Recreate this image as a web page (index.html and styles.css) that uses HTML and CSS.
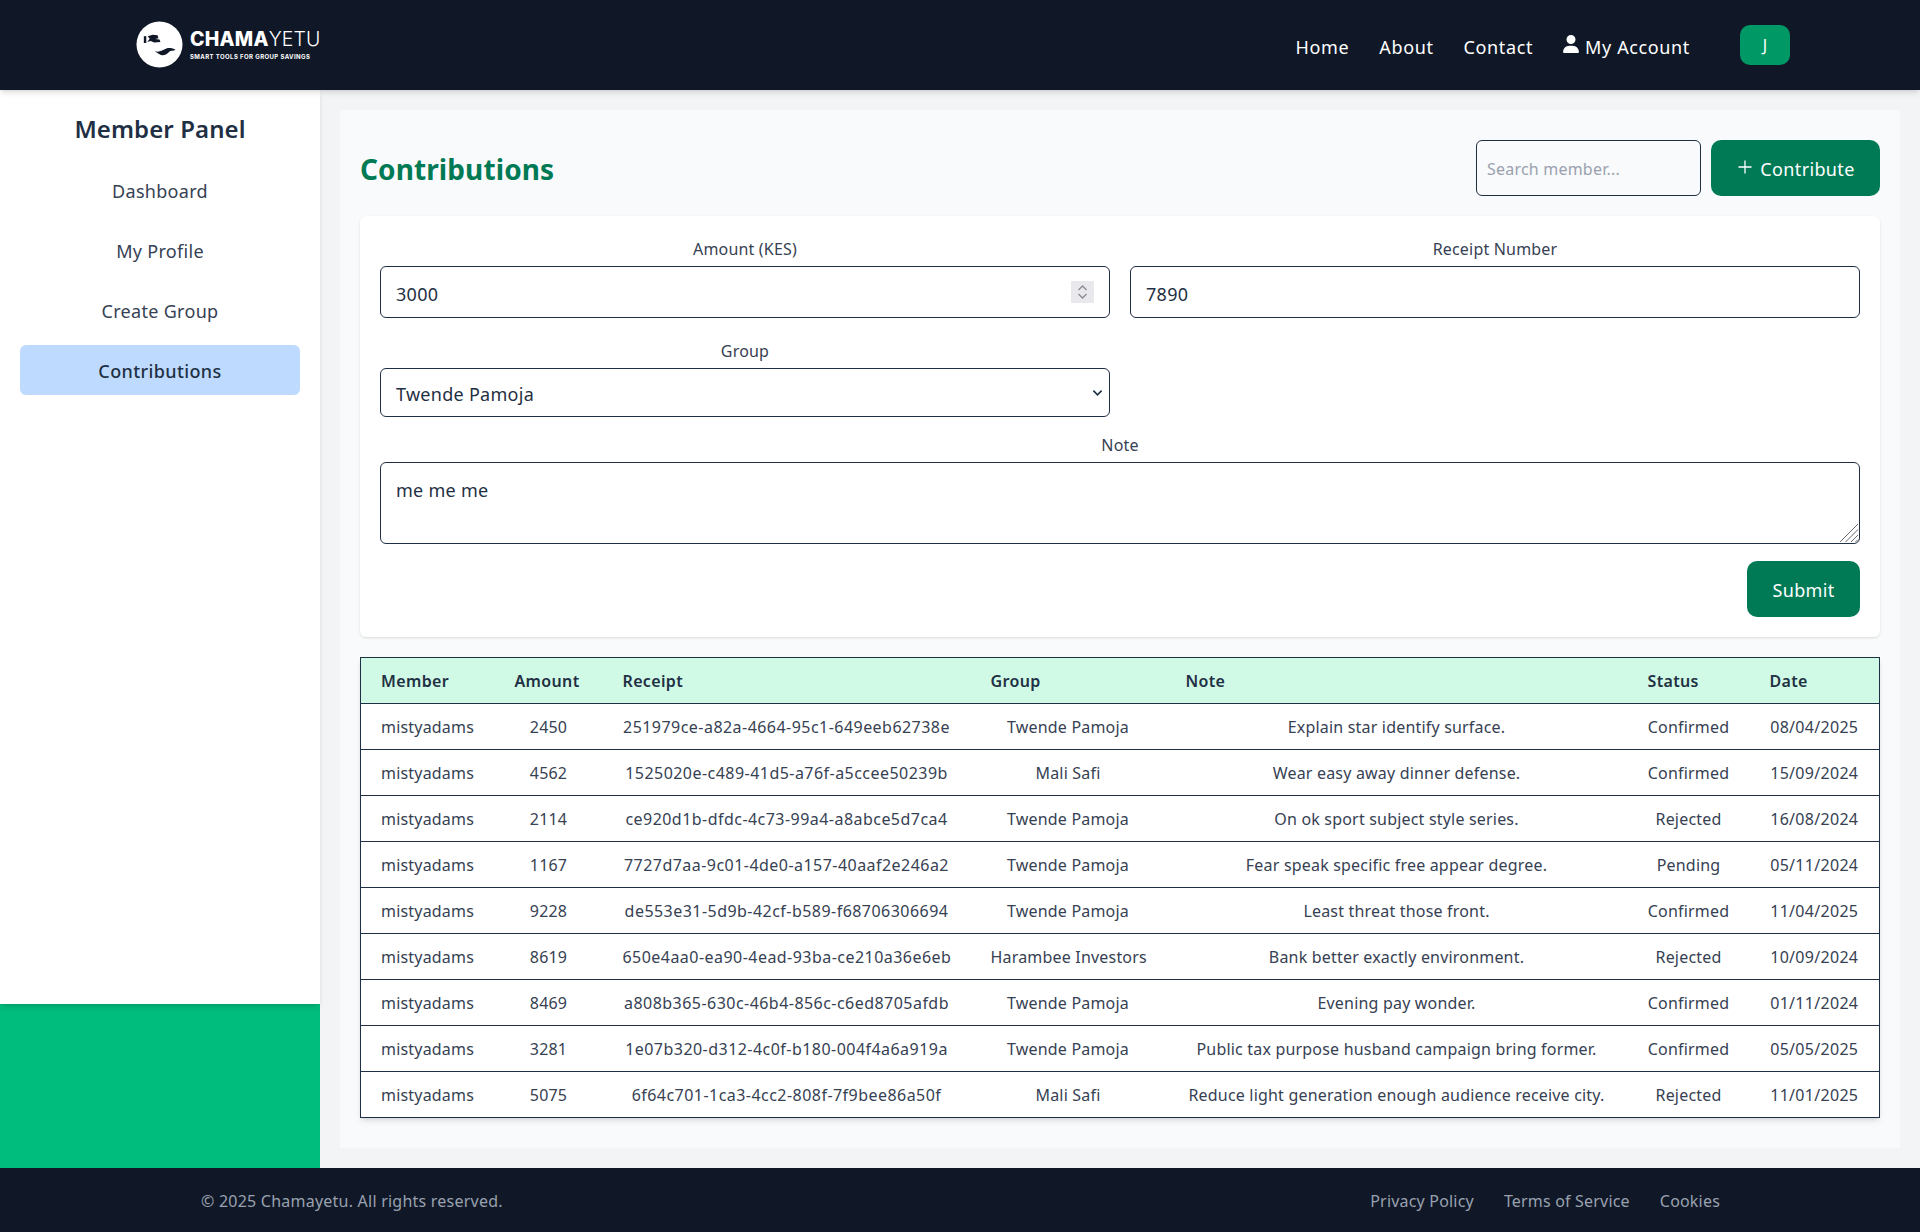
FILE: index.html
```html
<!doctype html>
<html lang="en">
<head>
<meta charset="utf-8">
<title>Contributions</title>
<link rel="stylesheet" href="styles.css">
</head>
<body>
<header class="topbar">
  <a class="logo" href="#">
    <svg class="logo-mark" viewBox="0 0 48 48" aria-hidden="true">
      <circle cx="24" cy="24" r="23.5" fill="#fff"/>
      <path d="M8 15.500h2.500v7H8z" fill="#101828"/>
      <path d="M12 15.500l5-1.500 5 .5 1 3-3.500 1 4.500.5 1 2.500-6.500.5-3.500-1.500-3.500 1 2.500-3.300z" fill="#101828"/>
      <path d="M19 31c3 .5 5 .5 7-.5l5-2.500c3-1 6.500-.5 9.500 1.500l-3 1c-2 0-3 .5-4 1.500-2 2-5 3.500-7 3-2-.5-4.500-2-7.500-4z" fill="#101828"/>
    </svg>
    <span class="logo-text">
      <span class="logo-name"><b>CHAMA</b>YETU</span>
      <span class="logo-tag">SMART TOOLS FOR GROUP SAVINGS</span>
    </span>
  </a>
  <nav class="topnav">
    <a href="#">Home</a>
    <a href="#">About</a>
    <a href="#">Contact</a>
    <a class="account" href="#">
      <svg class="user-icon" viewBox="0 0 448 512" aria-hidden="true"><path fill="currentColor" d="M224 256A128 128 0 1 0 224 0a128 128 0 1 0 0 256zm-45.700 48C79.800 304 0 383.800 0 482.300C0 498.700 13.300 512 29.700 512H418.300c16.400 0 29.700-13.300 29.700-29.700C448 383.800 368.200 304 269.700 304H178.300z"/></svg>
      My Account
    </a>
    <button class="avatar" type="button">J</button>
  </nav>
</header>

<div class="middle">
  <aside class="side">
    <div class="side-panel">
      <h2 class="side-title">Member Panel</h2>
      <ul class="side-menu">
        <li><a href="#">Dashboard</a></li>
        <li><a href="#">My Profile</a></li>
        <li><a href="#">Create Group</a></li>
        <li><a class="active" href="#">Contributions</a></li>
      </ul>
    </div>
    <div class="side-foot"></div>
  </aside>

  <main class="main">
    <section class="panel">
      <div class="panel-head">
        <h1 class="page-title">Contributions</h1>
        <div class="tools">
          <input class="search" type="text" placeholder="Search member...">
          <button class="btn btn-add" type="button">
            <svg class="plus" viewBox="0 0 16 16" aria-hidden="true"><path d="M8 1.500v13M1.500 8h13" stroke="currentColor" stroke-width="1.300" fill="none"/></svg>
            <span class="btn-label">Contribute</span>
          </button>
        </div>
      </div>

      <form class="card">
        <div class="form-grid">
          <label class="field">
            <span class="field-label">Amount (KES)</span>
            <span class="control-wrap">
              <input class="control control-tall" type="text" value="3000">
              <span class="spin">
                <svg viewBox="0 0 23 22" aria-hidden="true"><path d="M7.500 9l4-4 4 4M7.500 13l4 4 4-4" fill="none" stroke="#8b8b94" stroke-width="1.400"/></svg>
              </span>
            </span>
          </label>
          <label class="field">
            <span class="field-label">Receipt Number</span>
            <input class="control control-tall" type="text" value="7890">
          </label>
          <label class="field field-group">
            <span class="field-label">Group</span>
            <span class="control-wrap">
              <select class="control control-select">
                <option>Twende Pamoja</option>
                <option>Mali Safi</option>
                <option>Harambee Investors</option>
              </select>
              <svg class="chevron" viewBox="0 0 12 8" aria-hidden="true"><path d="M1.500 1.500L6 6l4.500-4.500" fill="none" stroke="#1f3044" stroke-width="1.800"/></svg>
            </span>
          </label>
          <label class="field field-wide">
            <span class="field-label">Note</span>
            <span class="control-wrap">
              <textarea class="control control-area">me me me</textarea>
              <svg class="grip" viewBox="0 0 20 20" aria-hidden="true"><path d="M1 19L19 1M6.500 19L19 6.500M12 19l7-7M16.500 19l2.500-2.500" fill="none" stroke="#6b6b72" stroke-width="1"/></svg>
            </span>
          </label>
        </div>
        <div class="form-actions">
          <button class="btn btn-submit" type="submit"><span class="btn-label">Submit</span></button>
        </div>
      </form>

      <table class="records">
        <thead>
          <tr>
            <th class="c-member">Member</th>
            <th class="c-amount">Amount</th>
            <th class="c-receipt">Receipt</th>
            <th class="c-group">Group</th>
            <th class="c-note">Note</th>
            <th class="c-status">Status</th>
            <th class="c-date">Date</th>
          </tr>
        </thead>
        <tbody>
          <tr><td>mistyadams</td><td>2450</td><td>251979ce-a82a-4664-95c1-649eeb62738e</td><td>Twende Pamoja</td><td>Explain star identify surface.</td><td>Confirmed</td><td>08/04/2025</td></tr>
          <tr><td>mistyadams</td><td>4562</td><td>1525020e-c489-41d5-a76f-a5ccee50239b</td><td>Mali Safi</td><td>Wear easy away dinner defense.</td><td>Confirmed</td><td>15/09/2024</td></tr>
          <tr><td>mistyadams</td><td>2114</td><td>ce920d1b-dfdc-4c73-99a4-a8abce5d7ca4</td><td>Twende Pamoja</td><td>On ok sport subject style series.</td><td>Rejected</td><td>16/08/2024</td></tr>
          <tr><td>mistyadams</td><td>1167</td><td>7727d7aa-9c01-4de0-a157-40aaf2e246a2</td><td>Twende Pamoja</td><td>Fear speak specific free appear degree.</td><td>Pending</td><td>05/11/2024</td></tr>
          <tr><td>mistyadams</td><td>9228</td><td>de553e31-5d9b-42cf-b589-f68706306694</td><td>Twende Pamoja</td><td>Least threat those front.</td><td>Confirmed</td><td>11/04/2025</td></tr>
          <tr><td>mistyadams</td><td>8619</td><td>650e4aa0-ea90-4ead-93ba-ce210a36e6eb</td><td>Harambee Investors</td><td>Bank better exactly environment.</td><td>Rejected</td><td>10/09/2024</td></tr>
          <tr><td>mistyadams</td><td>8469</td><td>a808b365-630c-46b4-856c-c6ed8705afdb</td><td>Twende Pamoja</td><td>Evening pay wonder.</td><td>Confirmed</td><td>01/11/2024</td></tr>
          <tr><td>mistyadams</td><td>3281</td><td>1e07b320-d312-4c0f-b180-004f4a6a919a</td><td>Twende Pamoja</td><td>Public tax purpose husband campaign bring former.</td><td>Confirmed</td><td>05/05/2025</td></tr>
          <tr><td>mistyadams</td><td>5075</td><td>6f64c701-1ca3-4cc2-808f-7f9bee86a50f</td><td>Mali Safi</td><td>Reduce light generation enough audience receive city.</td><td>Rejected</td><td>11/01/2025</td></tr>
        </tbody>
      </table>
    </section>
  </main>
</div>

<footer class="footer">
  <p class="copy">© 2025 Chamayetu. All rights reserved.</p>
  <nav class="foot-links">
    <a href="#">Privacy Policy</a>
    <a href="#">Terms of Service</a>
    <a href="#">Cookies</a>
  </nav>
</footer>
</body>
</html>
```
FILE: styles.css
```css
* { box-sizing: border-box; }
html, body { height: 100%; }
body {
  margin: 0;
  display: flex;
  flex-direction: column;
  min-height: 1232px;
  font-family: "Noto Sans", "Open Sans", sans-serif;
  font-size: 16px;
  letter-spacing: .19px;
  color: #1f3044;
  background: #f3f4f6;
}
a { color: inherit; text-decoration: none; }

/* top bar */
.topbar {
  position: relative;
  z-index: 2;
  flex: 0 0 90px;
  display: flex;
  align-items: center;
  justify-content: space-between;
  padding: 0 130px 0 136px;
  background: #101828;
  color: #fff;
  box-shadow: 0 4px 6px -1px rgba(0,0,0,.1), 0 2px 4px -2px rgba(0,0,0,.1);
}
.logo { display: flex; align-items: center; gap: 7px; margin-top: -1px; }
.logo-mark { width: 47px; height: 47px; display: block; }
.logo-text { display: flex; flex-direction: column; }
.logo-name {
  font-family: "Inter", sans-serif;
  font-size: 19.500px;
  font-weight: 300;
  line-height: 20px;
  letter-spacing: .1px;
}
.logo-name b { font-weight: 800; letter-spacing: .25px; }
.logo-tag {
  font-family: "Inter", sans-serif;
  font-size: 6px;
  font-weight: 700;
  line-height: 9px;
  letter-spacing: .41px;
  margin-top: 3px;
}
.topnav { display: flex; align-items: center; gap: 30px; font-size: 18px; letter-spacing: .63px; line-height: 28px; }
.topnav > a { padding-top: 3px; }
.account { display: flex; align-items: center; gap: 6px; }
.user-icon { width: 16px; height: 18px; display: block; margin-top: -5px; }
.avatar {
  width: 50px;
  height: 40px;
  margin-left: 20px;
  border: 0;
  border-radius: 10px;
  background: #009966;
  color: #fff;
  font: inherit;
  font-size: 16px;
}

/* layout */
.middle { flex: 1; display: flex; min-height: 0; }
.side { flex: 0 0 320px; display: flex; flex-direction: column; }
.side-panel {
  position: relative;
  flex: 1;
  padding: 21px 20px 20px;
  background: #fff;
  box-shadow: 0 4px 6px -1px rgba(0,0,0,.1), 0 2px 4px -2px rgba(0,0,0,.1);
}
.side-foot { flex: 0 0 164px; background: #00bc7d; }
.side-title {
  margin: 0 0 18px;
  font-size: 24px;
  font-weight: 600;
  line-height: 36px;
  letter-spacing: .1px;
  text-align: center;
}
.side-menu { list-style: none; margin: 0; padding: 0; display: flex; flex-direction: column; gap: 10px; }
.side-menu a {
  display: flex;
  align-items: center;
  justify-content: center;
  height: 50px;
  padding-top: 2px;
  border-radius: 6px;
  font-size: 18px;
  letter-spacing: .3px;
  color: #364153;
}
.side-menu a.active { background: #bedbff; color: #1f3044; font-weight: 500; letter-spacing: .38px; }

.main { flex: 1; padding: 20px; min-width: 0; }
.panel { height: 100%; padding: 30px 20px; background: #f9fafb; }
.panel-head { display: flex; align-items: center; justify-content: space-between; margin-bottom: 20px; }
.page-title { margin: 0; padding-top: 2px; font-size: 28px; font-weight: 700; letter-spacing: .1px; line-height: 40px; color: #007a55; }
.tools { display: flex; gap: 10px; }
.search {
  width: 225px;
  height: 56px;
  padding: 2px 10px 0;
  border: 1px solid #1f3044;
  border-radius: 6px;
  background: transparent;
  font: inherit;
  letter-spacing: .21px;
  color: #1f3044;
}
.search::placeholder { color: #99a1af; opacity: 1; }
.btn {
  display: inline-flex;
  align-items: center;
  justify-content: center;
  height: 56px;
  border: 0;
  border-radius: 10px;
  background: #007a55;
  color: #fff;
  font: inherit;
  font-size: 18px;
  letter-spacing: .35px;
}
.btn-label { padding-top: 2px; }
.btn-add { width: 169px; gap: 7px; padding-left: 7px; }
.plus { width: 16px; height: 16px; display: block; margin-top: -2px; }
.btn-submit { width: 113px; }

/* form card */
.card {
  padding: 21px 20px 20px;
  border-radius: 6px;
  background: #fff;
  box-shadow: 0 1px 3px 0 rgba(0,0,0,.1), 0 1px 2px -1px rgba(0,0,0,.1);
}
.form-grid { display: grid; grid-template-columns: 1fr 1fr; column-gap: 20px; }
.field { display: flex; flex-direction: column; }
.field-label {
  margin-bottom: 5px;
  line-height: 24px;
  text-align: center;
  color: #364153;
}
.field-group { margin-top: 21px; grid-column: 1; }
.field-wide { margin-top: 16px; grid-column: 1 / -1; }
.control {
  width: 100%;
  padding: 0 15px;
  border: 1px solid #1f3044;
  border-radius: 6px;
  background: #fff;
  font: inherit;
  font-size: 18px;
  letter-spacing: .28px;
  color: #1f3044;
  display: block;
}
.control-tall { height: 52px; padding-top: 4px; }
.control-select { height: 49px; padding-top: 2px; appearance: none; }
.control-area { height: 82px; padding: 15px; line-height: 24px; resize: none; }
.control-wrap { position: relative; display: block; }
.spin { position: absolute; top: 15px; right: 16px; width: 23px; height: 22px; background: #e9e9ed; }
.spin svg { display: block; width: 23px; height: 22px; }
.chevron { position: absolute; top: 21px; right: 7px; width: 11px; height: 8px; pointer-events: none; }
.grip { position: absolute; right: 1px; bottom: 1px; width: 20px; height: 20px; pointer-events: none; }
.form-actions { display: flex; justify-content: flex-end; margin-top: 17px; }

/* table */
.records {
  width: 1519px;
  margin-top: 20px;
  table-layout: fixed;
  border-collapse: collapse;
  background: #fff;
  box-shadow: 0 4px 6px -1px rgba(0,0,0,.1), 0 2px 4px -2px rgba(0,0,0,.1);
}
.records th, .records td {
  height: 46px;
  padding: 1px 20px 0;
  border: 1px solid #1f3044;
  border-width: 1px 0;
  white-space: nowrap;
}
.records tr > :first-child { border-left-width: 1px; }
.records tr > :last-child { border-right-width: 1px; }
.records th { background: #d0fae5; font-weight: 600; text-align: left; letter-spacing: .35px; }
.records td { text-align: center; color: #364153; }
.records td:first-child { text-align: left; }
.records td:nth-child(3) { letter-spacing: .46px; }
.records td:last-child { letter-spacing: .3px; }
.c-member { width: 134px; }
.c-amount { width: 108px; }
.c-receipt { width: 368px; }
.c-group { width: 195px; }
.c-note { width: 462px; }
.c-status { width: 122px; }
.c-date { width: 130px; }

/* footer */
.footer {
  flex: 0 0 64px;
  display: flex;
  align-items: center;
  justify-content: space-between;
  padding: 2px 200px 0 201px;
  background: #101828;
  color: #99a1af;
}
.copy { margin: 0; letter-spacing: .23px; }
.foot-links { display: flex; gap: 30px; }
```
